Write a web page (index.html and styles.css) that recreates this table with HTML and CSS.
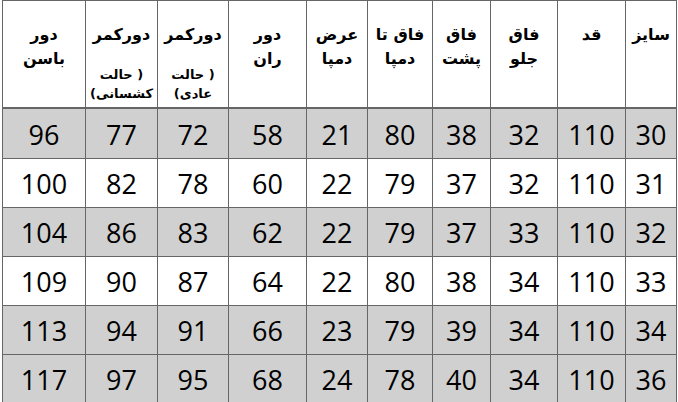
FILE: index.html
```html
<!DOCTYPE html>
<html lang="fa" dir="rtl">
<head>
<meta charset="utf-8">
<title>جدول سایز</title>
<link rel="stylesheet" href="styles.css">
</head>
<body>
<div class="sheet">
  <div class="grid">
    <div class="hd"><span>سایز</span></div>
    <div class="hd"><span>قد</span></div>
    <div class="hd"><span>فاق<br>جلو</span></div>
    <div class="hd"><span>فاق<br>پشت</span></div>
    <div class="hd"><span>فاق تا<br>دمپا</span></div>
    <div class="hd"><span>عرض<br>دمپا</span></div>
    <div class="hd"><span>دور<br>ران</span></div>
    <div class="hd"><span>دورکمر</span><div class="sub">( حالت<br>عادی)</div></div>
    <div class="hd"><span>دورکمر</span><div class="sub">( حالت<br>کشسانی)</div></div>
    <div class="hd"><span>دور<br>باسن</span></div>

    <div class="c g">30</div><div class="c g">110</div><div class="c g">32</div><div class="c g">38</div><div class="c g">80</div><div class="c g">21</div><div class="c g">58</div><div class="c g">72</div><div class="c g">77</div><div class="c g">96</div>
    <div class="c">31</div><div class="c">110</div><div class="c">32</div><div class="c">37</div><div class="c">79</div><div class="c">22</div><div class="c">60</div><div class="c">78</div><div class="c">82</div><div class="c">100</div>
    <div class="c g">32</div><div class="c g">110</div><div class="c g">33</div><div class="c g">37</div><div class="c g">79</div><div class="c g">22</div><div class="c g">62</div><div class="c g">83</div><div class="c g">86</div><div class="c g">104</div>
    <div class="c">33</div><div class="c">110</div><div class="c">34</div><div class="c">38</div><div class="c">80</div><div class="c">22</div><div class="c">64</div><div class="c">87</div><div class="c">90</div><div class="c">109</div>
    <div class="c g">34</div><div class="c g">110</div><div class="c g">34</div><div class="c g">39</div><div class="c g">79</div><div class="c g">23</div><div class="c g">66</div><div class="c g">91</div><div class="c g">94</div><div class="c g">113</div>
    <div class="c g">36</div><div class="c g">110</div><div class="c g">34</div><div class="c g">40</div><div class="c g">78</div><div class="c g">24</div><div class="c g">68</div><div class="c g">95</div><div class="c g">97</div><div class="c g">117</div>
  </div>
</div>
</body>
</html>
```

FILE: styles.css
```css
html, body {
  margin: 0;
  padding: 0;
  background: #ffffff;
}
body {
  width: 678px;
  height: 402px;
  overflow: hidden;
}
.sheet {
  direction: ltr;
  padding-left: 2px;
}
.grid {
  direction: rtl;
  display: grid;
  width: 675px;
  box-sizing: border-box;
  grid-template-columns: 50px 67px 66px 57px 64px 60px 77px 70px 71px 82px;
  grid-template-rows: 107px 49px 48px 48px 48px 48px 48px;
  gap: 1px;
  padding: 1px 1px 0 1px;
  background: #666666;
}
.hd {
  background: #ffffff;
  border-bottom: 1px solid #666666;
  box-sizing: border-box;
  display: flex;
  flex-direction: column;
  align-items: center;
  padding-top: 22px;
  font-family: "DejaVu Sans", sans-serif;
  font-weight: bold;
  font-size: 16px;
  line-height: 24px;
  color: #000;
  text-align: center;
}
.hd .sub {
  font-size: 13px;
  line-height: 19px;
  margin-top: 18px;
}
.c {
  background: #ffffff;
  display: flex;
  align-items: center;
  justify-content: center;
  font-family: "Open Sans", sans-serif;
  font-size: 27px;
  color: #000;
  padding-top: 1px;
}
.c.g {
  background: #d0d0d0;
}
```
